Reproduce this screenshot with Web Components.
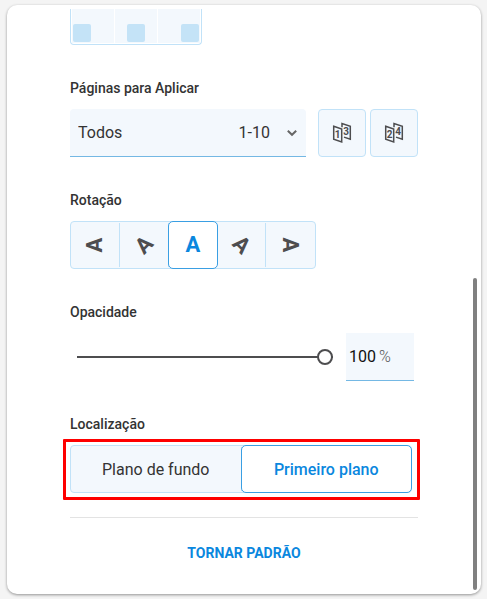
<!DOCTYPE html>
<html lang="pt-BR">
<head>
<meta charset="UTF-8">
<meta name="viewport" content="width=device-width, initial-scale=1.0">
<title>Opções de página</title>
<style>
    body{
        margin: 0;
        background: #f4f4f4;
        font-family: Roboto, "Liberation Sans", sans-serif;
        --color-text: #333;
        --color-icon: #4d4d4f;
        --color-active: #0a87de;
        --color-active-border: #3a9fe3;
        --color-line: #c1e2f8;
        --color-underline: #74b8e4;
        --bg-control: #f3f8fd;
        --bg-mark: #c4e3f7;
        --border-radius: 4px;
        --control-height: 48px;
    }
</style>
</head>
<body>
<options-panel>
    <position-grid></position-grid>
    <option-field label="Páginas para Aplicar">
        <page-range></page-range>
    </option-field>
    <option-field label="Rotação">
        <segment-group name="Rotação">
            <segment-item label="Girar 90 graus à esquerda" angle="-90">A</segment-item>
            <segment-item label="Girar 45 graus à esquerda" angle="-45">A</segment-item>
            <segment-item label="Sem rotação" angle="0" selected>A</segment-item>
            <segment-item label="Girar 45 graus à direita" angle="45">A</segment-item>
            <segment-item label="Girar 90 graus à direita" angle="90">A</segment-item>
        </segment-group>
    </option-field>
    <option-field label="Opacidade">
        <opacity-slider value="100"></opacity-slider>
    </option-field>
    <option-field label="Localização" highlight>
        <segment-group name="Localização" wide>
            <segment-item>Plano de fundo</segment-item>
            <segment-item selected>Primeiro plano</segment-item>
        </segment-group>
    </option-field>
    <default-action slot="footer">TORNAR PADRÃO</default-action>
</options-panel>

<script>
class BaseElement extends HTMLElement{
    constructor(){
        super();
        this.attachShadow({mode: "open"});
    }
    render(){
        const template = document.createElement("template");
        template.innerHTML = this.getTemplate() + this.getStyles();
        this.shadowRoot.replaceChildren(template.content.cloneNode(true));
    }
    connectedCallback(){
        this.render();
    }
}

class OptionsPanel extends BaseElement{
    getTemplate(){
        return `
        <main class="panel">
            <div class="panel__content"><slot></slot></div>
            <footer class="panel__footer"><slot name="footer"></slot></footer>
            <div class="panel__scroll"></div>
        </main>
        `;
    }
    getStyles(){
        return `
        <style>
        :host{
            display: block;
            box-sizing: border-box;
            min-height: 100vh;
            padding: 5px 6px 5px 7px;
        }
        .panel{
            position: relative;
            box-sizing: border-box;
            min-height: calc(100vh - 10px);
            padding: 4px 63px 0;
            background: #fff;
            border-radius: 10px;
            box-shadow: 0 1px 3px rgba(0, 0, 0, 0.4);
        }
        .panel__content{
            display: flex;
            flex-direction: column;
            gap: 33px;
        }
        .panel__footer{
            margin-top: 24px;
            padding: 25px 0 31px;
            border-top: 1px solid #e3e3e3;
        }
        .panel__scroll{
            position: absolute;
            top: 46.4%;
            right: 4px;
            bottom: 4px;
            width: 4px;
            border-radius: 2px;
            background: #808080;
        }
        </style>
        `;
    }
}
customElements.define("options-panel", OptionsPanel);

class PositionGrid extends BaseElement{
    getTemplate(){
        return `
        <button class="cell" aria-label="Inferior esquerdo"><i></i></button>
        <button class="cell cell--center" aria-label="Inferior centro"><i></i></button>
        <button class="cell cell--end" aria-label="Inferior direito"><i></i></button>
        `;
    }
    getStyles(){
        return `
        <style>
        :host{
            display: grid;
            grid-template-columns: repeat(3, 1fr);
            gap: 1px;
            box-sizing: border-box;
            width: 132px;
            height: 36px;
            padding: 0 1px 1px;
            border: 1px solid var(--color-line);
            border-top: 0;
            border-radius: 0 0 var(--border-radius) var(--border-radius);
        }
        .cell{
            display: flex;
            align-items: flex-end;
            padding: 1px;
            border: 0;
            background: var(--bg-control);
            cursor: pointer;
        }
        .cell--center{
            justify-content: center;
        }
        .cell--end{
            justify-content: flex-end;
        }
        i{
            width: 18px;
            height: 18px;
            border-radius: 2px;
            background: var(--bg-mark);
        }
        </style>
        `;
    }
}
customElements.define("position-grid", PositionGrid);

class OptionField extends BaseElement{
    getTemplate(){
        return `
        <h2>${this.getAttribute("label")}</h2>
        <div class="field"><slot></slot></div>
        `;
    }
    getStyles(){
        return `
        <style>
        :host{
            display: flex;
            flex-direction: column;
            gap: 11px;
        }
        h2{
            margin: 0;
            font-size: 14px;
            font-weight: 500;
            line-height: 20px;
            color: var(--color-text);
        }
        .field{
            position: relative;
        }
        :host([highlight]) .field::after{
            content: "";
            position: absolute;
            inset: -6px -2px -7px -7px;
            border: 3px solid #fe0000;
            border-radius: 1px;
            pointer-events: none;
        }
        </style>
        `;
    }
}
customElements.define("option-field", OptionField);

class PageRange extends BaseElement{
    getIcon(left, right){
        return `
        <svg width="20" height="22" viewBox="0 0 20 22" aria-hidden="true">
            <path d="M1.7 4.2 9.7 7V20L1.7 17.2Z"/>
            <path d="M10 5.2V1.6L18.3 4.4V17.2L12 15.1"/>
            <text x="5.7" y="16">${left}</text>
            <text x="14" y="13">${right}</text>
        </svg>
        `;
    }
    getTemplate(){
        return `
        <div class="select">
            <select aria-label="Páginas para Aplicar">
                <option>Todos</option>
            </select>
            <span class="select__range">1-10</span>
            <svg class="select__arrow" width="12" height="8" viewBox="0 0 12 8" aria-hidden="true">
                <path d="M1.8 1.8 6 5.8 10.2 1.8"/>
            </svg>
        </div>
        <div class="pages">
            <button aria-label="Páginas ímpares">${this.getIcon(1, 3)}</button>
            <button aria-label="Páginas pares">${this.getIcon(2, 4)}</button>
        </div>
        `;
    }
    getStyles(){
        return `
        <style>
        :host{
            display: flex;
            gap: 12px;
        }
        .select{
            flex: 1;
            display: grid;
            grid-template-columns: 1fr auto auto;
            align-items: center;
            column-gap: 16px;
            padding-right: 8px;
            border-bottom: 1px solid var(--color-underline);
            border-radius: var(--border-radius) var(--border-radius) 0 0;
            background: var(--bg-control);
            color: var(--color-text);
            font-size: 16px;
        }
        select{
            grid-area: 1 / 1 / 2 / 4;
            align-self: stretch;
            appearance: none;
            margin-right: -8px;
            padding: 0 8px;
            border: 0;
            background: none;
            color: inherit;
            font: inherit;
        }
        .select__range{
            grid-area: 1 / 2;
            pointer-events: none;
        }
        .select__arrow{
            grid-area: 1 / 3;
            pointer-events: none;
        }
        .pages{
            display: flex;
            gap: 4px;
        }
        button{
            display: grid;
            place-items: center;
            width: var(--control-height);
            height: var(--control-height);
            padding: 0;
            border: 1px solid var(--color-line);
            border-radius: var(--border-radius);
            background: var(--bg-control);
            cursor: pointer;
        }
        path{
            fill: none;
            stroke: var(--color-icon);
            stroke-width: 1.5;
        }
        .select__arrow path{
            stroke: #666;
            stroke-width: 2;
        }
        text{
            fill: var(--color-icon);
            font: 700 10px Roboto, sans-serif;
            text-anchor: middle;
        }
        </style>
        `;
    }
}
customElements.define("page-range", PageRange);

class SegmentGroup extends BaseElement{
    getTemplate(){
        return `<slot></slot>`;
    }
    getStyles(){
        return `
        <style>
        :host{
            display: inline-flex;
            vertical-align: top;
            box-sizing: border-box;
            height: var(--control-height);
            border: 1px solid var(--color-line);
            border-radius: var(--border-radius);
            background: var(--bg-control);
        }
        :host([wide]){
            display: flex;
            margin-right: 6px;
        }
        :host([wide]) ::slotted(*){
            flex: 1;
        }
        </style>
        `;
    }
    connectedCallback(){
        this.render();
        this.setAttribute("role", "group");
        this.setAttribute("aria-label", this.getAttribute("name"));
        this.addEventListener("click", (e) => {
            const item = e.target.closest("segment-item");
            if(!item) return;
            this.querySelectorAll("segment-item").forEach((el) => {
                el.toggleAttribute("selected", el === item);
            });
        });
    }
}
customElements.define("segment-group", SegmentGroup);

class SegmentItem extends BaseElement{
    static get observedAttributes(){
        return ["selected"];
    }
    getTemplate(){
        const label = this.getAttribute("label");
        return `
        <button ${label ? `aria-label="${label}"` : ""} aria-pressed="${this.hasAttribute("selected")}">
            <span><slot></slot></span>
        </button>
        `;
    }
    getStyles(){
        return `
        <style>
        :host{
            display: flex;
            margin: 1px 0;
            border-right: 1px solid var(--color-line);
        }
        :host(:last-child){
            border-right-color: transparent;
        }
        button{
            flex: 1;
            min-width: 48px;
            padding: 0;
            border: 0;
            background: none;
            color: var(--color-text);
            font: inherit;
            font-size: 16px;
            cursor: pointer;
        }
        :host([selected]){
            position: relative;
            z-index: 1;
            margin: -1px;
            border: 1px solid var(--color-active-border);
            border-radius: 5px;
            background: #fff;
        }
        :host([selected]) button{
            color: var(--color-active);
            font-weight: 500;
        }
        span{
            display: inline-block;
        }
        :host([angle]) button{
            font-size: 22px;
            font-weight: 700;
            line-height: 24px;
        }
        :host([angle]:not([selected])) button{
            color: var(--color-icon);
        }
        :host([angle]) span{
            transform: rotate(${this.getAttribute("angle") || 0}deg);
        }
        </style>
        `;
    }
    attributeChangedCallback(){
        if(this.isConnected) this.render();
    }
}
customElements.define("segment-item", SegmentItem);

class OpacitySlider extends BaseElement{
    getTemplate(){
        const value = this.getAttribute("value");
        return `
        <input type="range" min="0" max="100" value="${value}" aria-label="Opacidade">
        <label class="amount">
            <input type="text" inputmode="numeric" value="${value}" aria-label="Opacidade em porcentagem">
            <span>%</span>
        </label>
        `;
    }
    getStyles(){
        return `
        <style>
        :host{
            display: flex;
            gap: 13px;
            padding: 0 4px 0 7px;
        }
        input[type=range]{
            flex: 1;
            min-width: 0;
            margin: 0;
            appearance: none;
            background: none;
            cursor: pointer;
        }
        input[type=range]::-webkit-slider-runnable-track{
            height: 2px;
            background: var(--color-icon);
        }
        input[type=range]::-webkit-slider-thumb{
            appearance: none;
            box-sizing: border-box;
            width: 16px;
            height: 16px;
            margin-top: -7px;
            border: 2px solid var(--color-icon);
            border-radius: 50%;
            background: #fff;
        }
        .amount{
            display: flex;
            align-items: center;
            gap: 2px;
            box-sizing: border-box;
            width: 68px;
            height: var(--control-height);
            padding-left: 3px;
            border-bottom: 1px solid var(--color-underline);
            background: var(--bg-control);
            font-size: 16px;
        }
        .amount input{
            width: 28px;
            padding: 0;
            border: 0;
            background: none;
            color: #111;
            font: inherit;
        }
        .amount span{
            color: #555;
            font-weight: 300;
        }
        </style>
        `;
    }
    connectedCallback(){
        this.render();
        const [range, text] = this.shadowRoot.querySelectorAll("input");
        range.addEventListener("input", () => text.value = range.value);
        text.addEventListener("input", () => range.value = text.value);
    }
}
customElements.define("opacity-slider", OpacitySlider);

class DefaultAction extends BaseElement{
    getTemplate(){
        return `<button><slot></slot></button>`;
    }
    getStyles(){
        return `
        <style>
        :host{
            display: flex;
            justify-content: center;
        }
        button{
            padding: 0;
            border: 0;
            background: none;
            color: var(--color-active);
            font: inherit;
            font-size: 14px;
            font-weight: 700;
            line-height: 20px;
            cursor: pointer;
        }
        </style>
        `;
    }
}
customElements.define("default-action", DefaultAction);
</script>
</body>
</html>
